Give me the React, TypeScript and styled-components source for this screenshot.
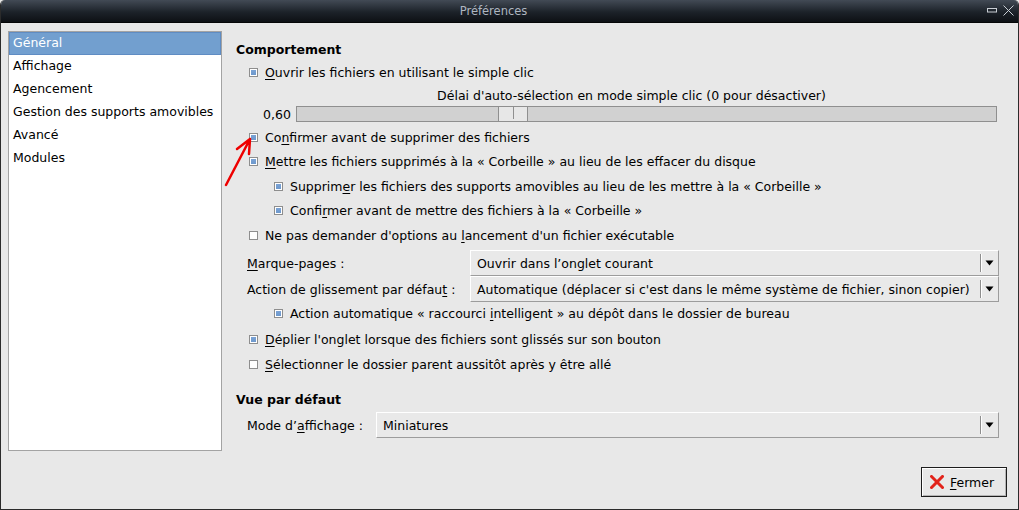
import React from 'react';
import styled, { createGlobalStyle } from 'styled-components';

const GlobalStyle = createGlobalStyle`
  html, body { margin: 0; padding: 0; background: #e8e8e8; }
  body {
    font-family: "DejaVu Sans", "Liberation Sans", sans-serif;
    font-size: 12.5px;
    color: #000;
  }
`;

const Window = styled.div`
  position: relative;
  width: 1019px;
  height: 510px;
  box-sizing: border-box;
  display: flex;
  flex-direction: column;
  background: #e8e8e8;
  border: 1px solid #2b2b2b;
  border-top: none;
  border-radius: 5px 5px 0 0;
  overflow: hidden;
`;

const TitleBar = styled.div`
  flex: 0 0 23px;
  box-sizing: border-box;
  display: flex;
  align-items: center;
  justify-content: center;
  padding-right: 32px;
  position: relative;
  background: linear-gradient(#424a55, #1c2229 55%, #0d1014);
  border-bottom: 1px solid #050607;
  color: #aeb6c0;
  font-size: 11.5px;
`;

const TitleButtons = styled.div`
  position: absolute;
  right: 4px;
  top: 5px;
  display: flex;
  align-items: center;
  gap: 6px;
`;

const Body = styled.div`
  flex: 1;
  display: flex;
  flex-direction: column;
  padding: 8px 11px 12px 7px;
  min-height: 0;
`;

const Top = styled.div`
  display: flex;
  height: 420px;
`;

const Sidebar = styled.div`
  width: 214px;
  box-sizing: border-box;
  background: #fff;
  border: 1px solid #a3a3a3;
  display: flex;
  flex-direction: column;
`;

const SideItem = styled.div<{ $active?: boolean }>`
  height: 23px;
  line-height: 21px;
  padding-left: 4px;
  color: ${p => (p.$active ? '#fff' : '#000')};
  background: ${p => (p.$active ? '#729fcf' : 'transparent')};
  box-shadow: ${p => (p.$active ? 'inset 0 0 0 1px #5f8cc3' : 'none')};
`;

const Main = styled.div`
  flex: 1;
  display: flex;
  flex-direction: column;
  padding: 8px 8px 0 14px;
`;

const Heading = styled.div<{ $gap?: number }>`
  height: 22px;
  line-height: 22px;
  font-weight: bold;
  margin-top: ${p => p.$gap ?? 0}px;
`;

const CheckRow = styled.div<{ $level?: number; $h?: number; $lift?: number }>`
  height: ${p => p.$h ?? 24.5}px;
  box-sizing: border-box;
  display: flex;
  align-items: center;
  gap: 7px;
  padding-left: ${p => 13 + (p.$level ?? 0) * 25}px;
  padding-bottom: ${p => p.$lift ?? 0}px;
  white-space: nowrap;
`;

const Box = styled.span<{ $checked?: boolean }>`
  width: 9px;
  height: 9px;
  box-sizing: border-box;
  flex: 0 0 9px;
  border: 1px solid #8e8e8e;
  padding: 1px;
  background: ${p =>
    p.$checked
      ? 'linear-gradient(#7ba3d5, #6d98cc) content-box, #fff'
      : '#fff'};
`;

const U = styled.span`
  text-decoration: underline;
  text-underline-offset: 2px;
`;

const SliderBlock = styled.div`
  margin-left: 27px;
  margin-right: 2px;
  margin-bottom: 3px;
  display: flex;
  flex-direction: column;
`;

const SliderCaption = styled.div`
  height: 22px;
  line-height: 24px;
  text-align: center;
  padding-left: 3px;
`;

const SliderRow = styled.div`
  display: flex;
  align-items: center;
  gap: 5px;
  height: 16px;
`;

const Trough = styled.div`
  position: relative;
  flex: 1;
  height: 16px;
  box-sizing: border-box;
  background: #d1d1d1;
  border: 1px solid #8f8f8f;
`;

const Handle = styled.div`
  position: absolute;
  top: 0;
  bottom: 0;
  width: 30px;
  box-sizing: border-box;
  background: #e7e7e7;
  border-left: 1px solid #8f8f8f;
  border-right: 1px solid #8f8f8f;
  &::after {
    content: '';
    position: absolute;
    left: 14px;
    top: 0;
    bottom: 2px;
    width: 1px;
    background: #8f8f8f;
  }
`;

const FieldGrid = styled.div<{ $label: number; $gap?: number }>`
  display: grid;
  grid-template-columns: ${p => p.$label}px 1fr;
  grid-auto-rows: 26px;
  margin-top: ${p => p.$gap ?? 0}px;
  padding-left: 11px;
`;

const FieldLabel = styled.div`
  display: flex;
  align-items: center;
  white-space: nowrap;
`;

const Combo = styled.div`
  display: flex;
  align-items: stretch;
  box-sizing: border-box;
  border-top: 1px solid #fff;
  border-left: 1px solid #fff;
  border-bottom: 1px solid #9c9c9c;
  border-right: 1px solid #9c9c9c;
  background: #e9e9e9;
  white-space: nowrap;
`;

const ComboText = styled.div`
  flex: 1;
  display: flex;
  align-items: center;
  padding-left: 6px;
  overflow: hidden;
`;

const ComboArrow = styled.div`
  width: 17px;
  display: flex;
  align-items: center;
  justify-content: center;
  margin: 3px 0;
  border-left: 1px solid #8e8e8e;
  box-shadow: inset 1px 0 0 #fff;
`;

const Footer = styled.div`
  display: flex;
  justify-content: flex-end;
  margin-top: 16px;
`;

const Button = styled.button`
  height: 30px;
  width: 86px;
  box-sizing: border-box;
  display: flex;
  align-items: center;
  justify-content: center;
  gap: 6px;
  padding: 0 4px 0 0;
  font: inherit;
  color: #000;
  background: #e8e8e8;
  border: 1px solid #1d1d1d;
  box-shadow: inset 1px 1px 0 #fff, inset -1px -1px 0 #b5b5b5;
`;

const Arrow = styled.svg`
  position: absolute;
  left: 0;
  top: 0;
  pointer-events: none;
`;

const Triangle = () => (
  <svg width="9" height="6" viewBox="0 0 9 6">
    <path d="M0.5 0.5 H8.5 L4.5 5.5 Z" fill="#000" />
  </svg>
);

const Check = ({
  checked,
  level,
  h,
  lift,
  children,
}: {
  checked?: boolean;
  level?: number;
  h?: number;
  lift?: number;
  children: React.ReactNode;
}) => (
  <CheckRow $level={level} $h={h} $lift={lift}>
    <Box $checked={checked} />
    <span>{children}</span>
  </CheckRow>
);

const Select = ({ value }: { value: string }) => (
  <Combo>
    <ComboText>{value}</ComboText>
    <ComboArrow>
      <Triangle />
    </ComboArrow>
  </Combo>
);

const sections = ['Général', 'Affichage', 'Agencement', 'Gestion des supports amovibles', 'Avancé', 'Modules'];

export default function App() {
  const delay = 0.6;
  const maxDelay = 2;

  return (
    <>
      <GlobalStyle />
      <Window>
        <TitleBar>
          Préférences
          <TitleButtons>
            <svg width="10" height="5" viewBox="0 0 10 5">
              <rect x="0.5" y="0.5" width="9" height="3.5" fill="none" stroke="#c9ced4" />
            </svg>
            <svg width="11" height="11" viewBox="0 0 11 11">
              <path d="M0.5 0.5 L10.5 10.5 M10.5 0.5 L0.5 10.5" stroke="#c9ced4" strokeWidth="1" />
            </svg>
          </TitleButtons>
        </TitleBar>

        <Body>
          <Top>
            <Sidebar>
              {sections.map((s, i) => (
                <SideItem key={s} $active={i === 0}>
                  {s}
                </SideItem>
              ))}
            </Sidebar>

            <Main>
              <Heading>Comportement</Heading>
              <Check checked h={23}>
                <U>O</U>uvrir les fichiers en utilisant le simple clic
              </Check>
              <SliderBlock>
                <SliderCaption>Délai d'auto-sélection en mode simple clic (0 pour désactiver)</SliderCaption>
                <SliderRow>
                  <span>0,60</span>
                  <Trough>
                    <Handle style={{ left: `calc(${(delay / maxDelay) * 100}% - ${(delay / maxDelay) * 30}px)` }} />
                  </Trough>
                </SliderRow>
              </SliderBlock>
              <Check checked>
                Co<U>n</U>firmer avant de supprimer des fichiers
              </Check>
              <Check checked>
                <U>M</U>ettre les fichiers supprimés à la « Corbeille » au lieu de les effacer du disque
              </Check>
              <Check checked level={1}>
                Supprim<U>e</U>r les fichiers des supports amovibles au lieu de les mettre à la « Corbeille »
              </Check>
              <Check checked level={1}>
                Confi<U>r</U>mer avant de mettre des fichiers à la « Corbeille »
              </Check>
              <Check>
                Ne pas demander d'options au <U>l</U>ancement d'un fichier exécutable
              </Check>

              <FieldGrid $label={223} $gap={2.5}>
                <FieldLabel>
                  <span>
                    <U>M</U>arque-pages :
                  </span>
                </FieldLabel>
                <Select value="Ouvrir dans l’onglet courant" />
                <FieldLabel>
                  <span>
                    Action de glissement par défau<U>t</U> :
                  </span>
                </FieldLabel>
                <Select value="Automatique (déplacer si c'est dans le même système de fichier, sinon copier)" />
              </FieldGrid>

              <Check checked level={1} h={25.5} lift={3}>
                Action automatique « raccourci <U>i</U>ntelligent » au dépôt dans le dossier de bureau
              </Check>
              <Check checked>
                <U>D</U>éplier l'onglet lorsque des fichiers sont glissés sur son bouton
              </Check>
              <Check>
                <U>S</U>électionner le dossier parent aussitôt après y être allé
              </Check>

              <Heading $gap={12.5}>Vue par défaut</Heading>
              <FieldGrid $label={129} $gap={1}>
                <FieldLabel>
                  <span>
                    Mode d’<U>a</U>ffichage :
                  </span>
                </FieldLabel>
                <Select value="Miniatures" />
              </FieldGrid>
            </Main>
          </Top>

          <Footer>
            <Button>
              <svg width="14" height="14" viewBox="0 0 14 14">
                <path d="M1.5 1.5 L12.5 12.5 M12.5 1.5 L1.5 12.5" stroke="#e2231a" strokeWidth="3" strokeLinecap="square" />
              </svg>
              <span>
                <U>F</U>ermer
              </span>
            </Button>
          </Footer>
        </Body>

        <Arrow width="1019" height="510">
          <path
            d="M225 185 L249 139 M249 139 L236 149 M249 139 L248 154"
            stroke="#ee0000"
            strokeWidth="2.5"
            strokeLinecap="round"
            fill="none"
          />
        </Arrow>
      </Window>
    </>
  );
}
